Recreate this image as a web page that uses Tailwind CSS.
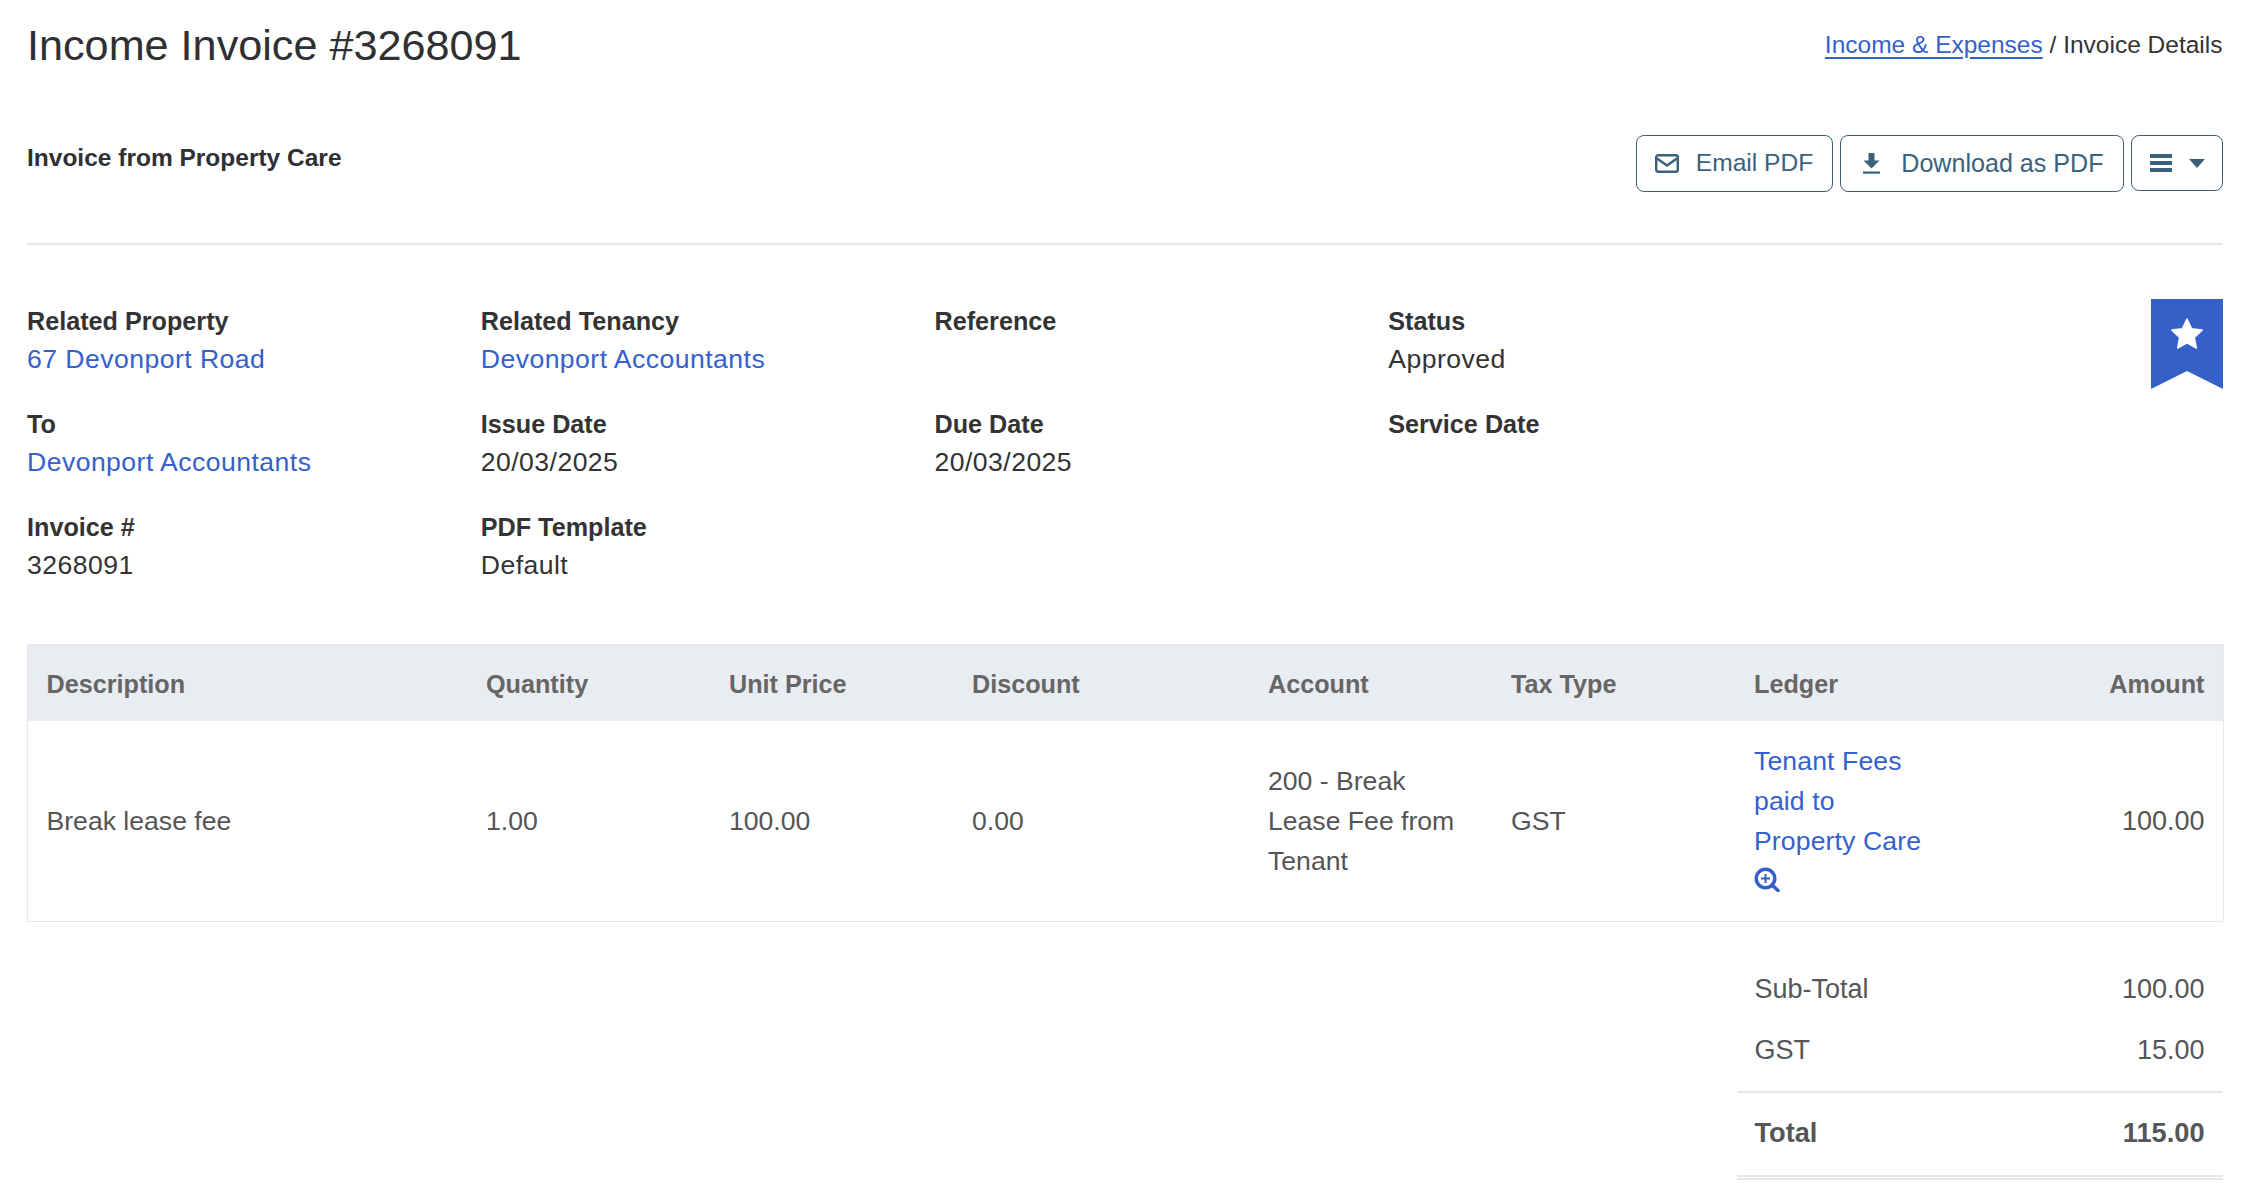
<!DOCTYPE html>
<html lang="en">
<head>
    <meta charset="UTF-8">
    <meta name="viewport" content="width=device-width, initial-scale=1.0">
    <title>Income Invoice #3268091</title>
    <script src="https://cdn.jsdelivr.net/npm/@tailwindcss/browser@4"></script>
</head>
<body class="bg-white font-['Liberation_Sans',Arial,sans-serif] text-[#333]">
    <div class="pl-[27px] pr-[41.5px] pt-[19px]">
        <!-- Title and breadcrumb -->
        <div class="flex items-start justify-between">
            <h1 class="text-[43.2px] leading-[52px] font-normal text-[#2f3034]">Income Invoice #3268091</h1>
            <div class="mt-[10px] text-[24.5px] leading-[32px]">
                <a href="#" class="text-[#3461cb] underline underline-offset-[4px]">Income &amp; Expenses</a> / Invoice Details
            </div>
        </div>

        <!-- Actions -->
        <div class="mt-[64px] flex items-start justify-between border-b-2 border-[#e6e6e6] pb-[51px]">
            <h2 class="mt-[7px] text-[24.5px] leading-[32px] font-bold text-[#2f3034]">Invoice from Property Care</h2>
            <div class="flex gap-[7px] text-[24.6px] text-[#3a627c]">
                <button class="flex h-[57px] items-center gap-[17px] rounded-[8px] border-[1.5px] border-[#38617a] bg-white pl-[18px] pr-[19px]">
                    <svg width="24" height="19" viewBox="0 0 24 19" fill="none" stroke="#38617a" stroke-width="2.4" stroke-linejoin="round">
                        <rect x="1.2" y="1.2" width="21.6" height="16.6" rx="2"/>
                        <path d="M2 4.5 12 11.5 22 4.5"/>
                    </svg>
                    <span>Email PDF</span>
                </button>
                <button class="flex h-[57px] items-center gap-[21px] rounded-[8px] border-[1.5px] border-[#38617a] bg-white pl-[22px] pr-[19px]">
                    <svg width="17" height="21" viewBox="0 0 17 21" fill="#38617a">
                        <path d="M5.5 0h6v7.5h5L8.5 15.5 .5 7.5h5z"/>
                        <rect x="0" y="18.5" width="17" height="2.2"/>
                    </svg>
                    <span class="text-[25.1px]">Download as PDF</span>
                </button>
                <button class="flex h-[56px] items-center gap-[17px] rounded-[8px] border-[1.5px] border-[#38617a] bg-white pl-[18px] pr-[17px]">
                    <svg width="22" height="18" viewBox="0 0 22 18" fill="#38617a">
                        <rect y="0" width="22" height="4"/>
                        <rect y="7" width="22" height="4"/>
                        <rect y="14" width="22" height="4"/>
                    </svg>
                    <svg width="16" height="9" viewBox="0 0 16 9" fill="#38617a"><path d="M0 0h16L8 9z"/></svg>
                </button>
            </div>
        </div>

        <!-- Invoice details -->
        <div class="flex items-start justify-between pt-[54px]">
            <div class="mt-[2.5px] grid w-[1815px] grid-cols-4 gap-y-[27px] text-[26.6px] leading-[38px] tracking-[0.45px]">
                <div>
                    <div class="text-[25.2px] font-bold tracking-normal">Related Property</div>
                    <a href="#" class="text-[#3461cb]">67 Devonport Road</a>
                </div>
                <div>
                    <div class="text-[25.2px] font-bold tracking-normal">Related Tenancy</div>
                    <a href="#" class="text-[#3461cb]">Devonport Accountants</a>
                </div>
                <div>
                    <div class="text-[25.2px] font-bold tracking-normal">Reference</div>
                </div>
                <div>
                    <div class="text-[25.2px] font-bold tracking-normal">Status</div>
                    <div>Approved</div>
                </div>
                <div>
                    <div class="text-[25.2px] font-bold tracking-normal">To</div>
                    <a href="#" class="text-[#3461cb]">Devonport Accountants</a>
                </div>
                <div>
                    <div class="text-[25.2px] font-bold tracking-normal">Issue Date</div>
                    <div>20/03/2025</div>
                </div>
                <div>
                    <div class="text-[25.2px] font-bold tracking-normal">Due Date</div>
                    <div>20/03/2025</div>
                </div>
                <div>
                    <div class="text-[25.2px] font-bold tracking-normal">Service Date</div>
                </div>
                <div>
                    <div class="text-[25.2px] font-bold tracking-normal">Invoice #</div>
                    <div>3268091</div>
                </div>
                <div>
                    <div class="text-[25.2px] font-bold tracking-normal">PDF Template</div>
                    <div>Default</div>
                </div>
            </div>
            <svg width="72" height="90" viewBox="0 0 72 90" class="flex-none">
                <path d="M0 0h72v90L36 72 0 90z" fill="#3560c8"/>
                <path d="M36 20l4.6 9.8 10.4 1.3-7.7 7.3 2 10.6-9.3-5.2-9.3 5.2 2-10.6-7.7-7.3 10.4-1.3z" fill="#fff" stroke="#fff" stroke-width="1.5" stroke-linejoin="round"/>
            </svg>
        </div>

        <!-- Line items -->
        <table class="mt-[60.5px] w-full table-fixed border border-[#e6e8eb] text-[26.6px] leading-[40px] text-[#555]">
            <colgroup>
                <col class="w-[440px]">
                <col class="w-[243px]">
                <col class="w-[243px]">
                <col class="w-[296px]">
                <col class="w-[243px]">
                <col class="w-[243px]">
                <col class="w-[488px]">
            </colgroup>
            <thead>
                <tr class="h-[76px] bg-[#e9edf1] text-left text-[25.2px] font-bold text-[#666]">
                    <th class="px-[18.5px] pt-[2px]">Description</th>
                    <th class="px-[18.5px] pt-[2px]">Quantity</th>
                    <th class="px-[18.5px] pt-[2px]">Unit Price</th>
                    <th class="px-[18.5px] pt-[2px]">Discount</th>
                    <th class="px-[18.5px] pt-[2px]">Account</th>
                    <th class="px-[18.5px] pt-[2px]">Tax Type</th>
                    <th class="px-[18.5px] pt-[2px]">
                        <div class="flex justify-between"><span>Ledger</span><span>Amount</span></div>
                    </th>
                </tr>
            </thead>
            <tbody>
                <tr>
                    <td class="px-[18.5px] py-[20.5px]">Break lease fee</td>
                    <td class="px-[18.5px] py-[20.5px]">1.00</td>
                    <td class="px-[18.5px] py-[20.5px]">100.00</td>
                    <td class="px-[18.5px] py-[20.5px]">0.00</td>
                    <td class="px-[18.5px] py-[20.5px]">200 - Break<br>Lease Fee from<br>Tenant</td>
                    <td class="px-[18.5px] py-[20.5px]">GST</td>
                    <td class="px-[18.5px] py-[20.5px]">
                        <div class="flex items-center justify-between">
                            <div class="text-[#3461cb]">
                                <a href="#" class="tracking-[0.12px]">Tenant Fees<br>paid to<br>Property Care</a>
                                <svg width="26" height="25" viewBox="0 0 26 25" fill="none" stroke="#3560c8" class="mt-[6px] mb-[8px]">
                                    <circle cx="11.5" cy="11.5" r="9.3" stroke-width="3.4"/>
                                    <path d="M18 18l6 5.5" stroke-width="3.6" stroke-linecap="round"/>
                                    <path d="M7 11.5h9M11.5 7v9" stroke-width="2"/>
                                </svg>
                            </div>
                            <span class="text-[27px]">100.00</span>
                        </div>
                    </td>
                </tr>
            </tbody>
        </table>

        <!-- Totals -->
        <div class="mt-[37px] ml-auto w-[486px] text-[27px] leading-[40px] text-[#55565a]">
            <div class="flex justify-between px-[18px] py-[10.5px]"><span>Sub-Total</span><span>100.00</span></div>
            <div class="flex justify-between px-[18px] pt-[10.5px] pb-[21px]"><span>GST</span><span>15.00</span></div>
            <div class="flex justify-between border-t-2 border-b-[5px] border-t-[#e8e8e8] border-b-[#e8e8e8] [border-bottom-style:double] px-[18px] pt-[20px] pb-[22px] text-[27.2px] font-bold"><span>Total</span><span>115.00</span></div>
        </div>
    </div>
</body>
</html>
